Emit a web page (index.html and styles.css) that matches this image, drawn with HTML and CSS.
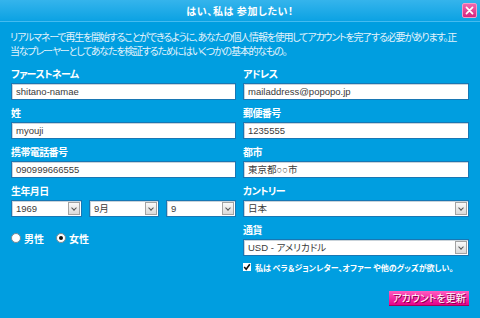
FILE: index.html
```html
<!DOCTYPE html>
<html lang="ja">
<head>
<meta charset="utf-8">
<title>はい、私は 参加したい！</title>
<link rel="stylesheet" href="styles.css">
</head>
<body>
<div class="dialog">
  <header class="titlebar">
    <h1 class="title">はい、私は 参加したい！</h1>
    <button class="close" type="button" aria-label="閉じる">
      <svg viewBox="0 0 15 15" width="15" height="15"><path d="M4 4 L11 11 M11 4 L4 11" stroke="#fff" stroke-width="2" stroke-linecap="round"/></svg>
    </button>
  </header>
  <p class="intro">リアルマネーで再生を開始することができるように、あなたの個人情報を使用してアカウントを完了する必要があります。正<br>当なプレーヤーとしてあなたを検証するためにはいくつかの基本的なもの。</p>
  <form class="form">
    <div class="col">
      <div class="field"><label class="label">ファーストネーム</label><div class="input">shitano-namae</div></div>
      <div class="field"><label class="label">姓</label><div class="input">myouji</div></div>
      <div class="field"><label class="label">携帯電話番号</label><div class="input">090999666555</div></div>
      <div class="field"><label class="label">生年月日</label>
        <div class="dob">
          <div class="select"><span class="value">1969</span><span class="arrow"></span></div>
          <div class="select"><span class="value">9月</span><span class="arrow"></span></div>
          <div class="select"><span class="value">9</span><span class="arrow"></span></div>
        </div>
      </div>
      <div class="radios">
        <span class="radio"><span class="dot"></span>男性</span>
        <span class="radio checked"><span class="dot"></span>女性</span>
      </div>
    </div>
    <div class="col">
      <div class="field"><label class="label">アドレス</label><div class="input">mailaddress@popopo.jp</div></div>
      <div class="field"><label class="label">郵便番号</label><div class="input">1235555</div></div>
      <div class="field"><label class="label">都市</label><div class="input">東京都○○市</div></div>
      <div class="field"><label class="label">カントリー</label><div class="select"><span class="value">日本</span><span class="arrow"></span></div></div>
      <div class="field"><label class="label">通貨</label><div class="select"><span class="value">USD - アメリカドル</span><span class="arrow"></span></div></div>
      <div class="check"><span class="box"><svg viewBox="0 0 8 8" width="8" height="8"><path d="M1.2 4 L3.2 6.2 L6.8 1.2" fill="none" stroke="#111" stroke-width="1.6"/></svg></span>私は ベラ＆ジョンレター、オファー や他のグッズが欲しい。</div>
      <div class="actions"><button class="submit" type="button">アカウントを更新</button></div>
    </div>
  </form>
</div>
</body>
</html>
```
FILE: styles.css
```css
html, body {
  margin: 0;
  padding: 0;
  width: 480px;
  height: 318px;
  overflow: hidden;
}
body {
  background: #009ee0;
  font-family: "Noto Sans CJK JP", "Liberation Sans", sans-serif;
  font-feature-settings: "palt";
  color: #fff;
}
.dialog {
  width: 480px;
  height: 318px;
  background: #009ee0;
}
.titlebar {
  height: 21px;
  border-bottom: 1px solid #45bbef;
  background: linear-gradient(#35b4ec, #0ba2e3);
  display: grid;
  grid-template-columns: 1fr auto 1fr;
  align-items: center;
}
.title {
  grid-column: 2;
  margin: 0;
  font-size: 10px;
  font-weight: 700;
  line-height: 21px;
  letter-spacing: 0.6px;
}
.close {
  grid-column: 3;
  justify-self: end;
  margin-right: 3px;
  width: 15px;
  height: 15px;
  padding: 0;
  border: 1px solid #f59cc8;
  border-radius: 2px;
  background: linear-gradient(#f067ad, #d8267f);
  display: flex;
  align-items: center;
  justify-content: center;
}
.close svg { width: 13px; height: 13px; }
.intro {
  margin: 8px 10px 0 10px;
  font-size: 10px;
  line-height: 14px;
  color: #e3f3fc;
  letter-spacing: -1.2px;
  white-space: nowrap;
}
.form {
  display: grid;
  grid-template-columns: 225px 226px;
  column-gap: 7px;
  padding: 9px 0 0 11px;
}
.field {
  margin-bottom: 6px;
}
.label {
  display: block;
  font-size: 10px;
  font-weight: 700;
  line-height: 14px;
  margin-bottom: 2px;
  letter-spacing: -0.6px;
}
.input, .select {
  box-sizing: border-box;
  height: 17px;
  background: #fff;
  border: 1px solid #1877b4;
  box-shadow: inset 1px 1px 0 #c9d3da;
  color: #3a3a3a;
  font-family: "Liberation Sans", "Noto Sans CJK JP", sans-serif;
  font-size: 9.5px;
  line-height: 15px;
  padding-left: 4px;
  white-space: nowrap;
}
.select {
  display: flex;
  align-items: center;
  justify-content: space-between;
  padding-right: 1px;
}
.arrow {
  box-sizing: border-box;
  width: 12px;
  height: 13px;
  border: 1px solid #a3a3a3;
  background: linear-gradient(#fafafa, #d9d9d9);
  position: relative;
}
.arrow::after {
  content: "";
  position: absolute;
  left: 3px;
  top: 3px;
  width: 3px;
  height: 3px;
  border-right: 1.3px solid #555;
  border-bottom: 1.3px solid #555;
  transform: rotate(45deg);
}
.dob {
  display: grid;
  grid-template-columns: 71px 70px 70px;
  column-gap: 7px;
}
.radios {
  display: flex;
  gap: 12px;
  margin-top: 14px;
  height: 14px;
  align-items: center;
}
.radio {
  display: flex;
  align-items: center;
  gap: 3px;
  font-size: 10px;
  font-weight: 700;
}
.dot {
  box-sizing: border-box;
  width: 10px;
  height: 10px;
  border-radius: 50%;
  background: #fff;
  border: 1px solid #7d8a92;
  display: flex;
  align-items: center;
  justify-content: center;
}
.radio.checked .dot::after {
  content: "";
  width: 4px;
  height: 4px;
  border-radius: 50%;
  background: #111;
}
.check {
  display: flex;
  align-items: center;
  gap: 4px;
  margin-top: 3px;
  height: 10px;
  font-size: 8px;
  font-weight: 700;
  letter-spacing: 0px;
  white-space: nowrap;
}
.box {
  box-sizing: border-box;
  width: 8px;
  height: 8px;
  background: #fff;
  display: flex;
}
.box svg { display: block; }
.actions {
  display: flex;
  justify-content: flex-end;
  margin-top: 19px;
}
.submit {
  box-sizing: border-box;
  width: 80px;
  height: 15px;
  padding: 0;
  border: 0;
  border-bottom: 1px solid #a0005a;
  background: linear-gradient(#ff5cc0, #e8008a);
  color: #fff;
  font-family: "Noto Sans CJK JP", sans-serif;
  font-feature-settings: "palt";
  font-size: 10px;
  line-height: 14px;
  text-shadow: 1px 1px 0 #7a0044;
}
```
